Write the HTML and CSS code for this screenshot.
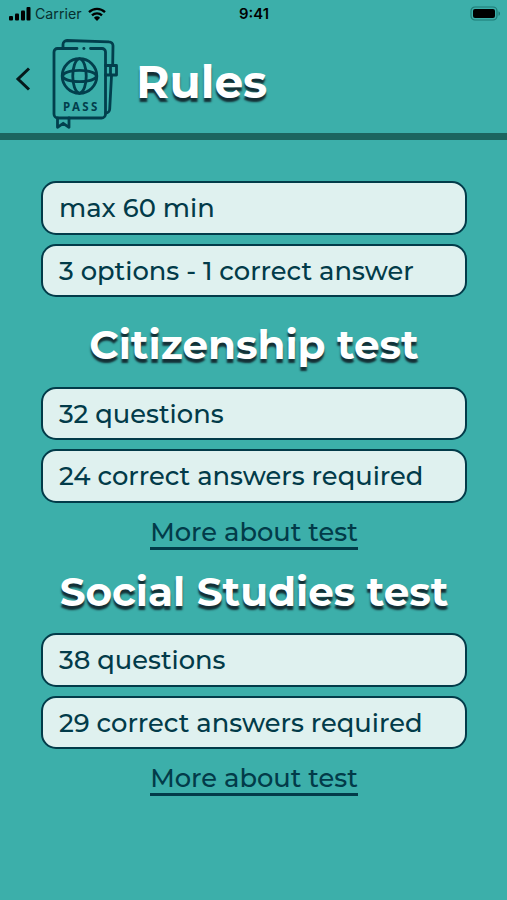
FILE: index.html
```
<!DOCTYPE html>
<html lang="en">
<head>
  <meta charset="UTF-8">
  <meta name="viewport" content="width=device-width, initial-scale=1">
  <title>Rules</title>
  <link rel="stylesheet" href="styles.css">
</head>
<body>

<div class="status-bar">
  <div class="status-left">
    <svg class="signal" viewBox="0 0 22 14" width="22" height="14">
      <rect x="0" y="9" width="4" height="4.5" rx="1"/>
      <rect x="6" y="6.5" width="4" height="7" rx="1"/>
      <rect x="12" y="3.5" width="4" height="10" rx="1"/>
      <rect x="17.5" y="0" width="4" height="13.5" rx="1"/>
    </svg>
    <span class="carrier">Carrier</span>
    <svg class="wifi" viewBox="0 0 18 14" width="18" height="14">
      <path d="M1 5.2a11.5 11.5 0 0 1 16 0M4 8.4a7.2 7.2 0 0 1 10 0" fill="none" stroke="#000" stroke-width="2.3"/>
      <path d="M9 14L5.9 10.8a4.5 4.5 0 0 1 6.2 0z"/>
    </svg>
  </div>
  <div class="time">9:41</div>
  <svg class="battery" viewBox="0 0 31 15" width="31" height="15">
    <rect x="1" y="1" width="26" height="13" rx="4" fill="none" stroke="#1d7a74" stroke-width="1.2"/>
    <rect x="3" y="3" width="22" height="9" rx="2"/>
    <path d="M28.5 5.2v4.6c2-.8 2-3.8 0-4.6z" fill="#1d7a74"/>
  </svg>
</div>

<header class="header">
  <a class="back" href="#" aria-label="Back">
    <svg viewBox="0 0 16 24" width="16" height="24">
      <path d="M14 1.5L3 12l11 10.5" fill="none" stroke="#05191b" stroke-width="3"/>
    </svg>
  </a>
  <svg class="passport" viewBox="0 0 68 92" width="68" height="92">
    <g fill="none" stroke="#023f4d" stroke-width="2.8" stroke-linecap="round" stroke-linejoin="round">
      <path d="M26 10.5H6.5A3.500 3.500 0 0 0 3 14v62a4 4 0 0 0 4 4h43.500a4 4 0 0 0 4-4V14a3.500 3.500 0 0 0-3.500-3.500H39.500"/>
      <path d="M32.8 10.5h.2"/>
      <path d="M12 10V6.500a4 4 0 0 1 4-4l42 1.300a4 4 0 0 1 4 4l-.3 18.700M60.500 38l-1.800 33a4 4 0 0 1-4 4"/>
      <path d="M54.500 27.500h11V37h-11M59.500 27.500V37"/>
      <path d="M6.500 80v9.300l5.700-4 5.800 4V80"/>
      <circle cx="28.500" cy="38" r="17.300"/>
      <path d="M28.500 20.700c-9 2-9 32.600 0 34.600M28.500 20.700c9 2 9 32.600 0 34.600"/>
      <path d="M11.500 38c3-7.500 31-7.500 34 0M11.500 38c3 7.500 31 7.500 34 0"/>
    </g>
    <text x="12" y="73" class="pass-text">PASS</text>
  </svg>
  <h1>Rules</h1>
</header>

<main class="content">
  <div class="card">max 60 min</div>
  <div class="card">3 options - 1 correct answer</div>

  <h2>Citizenship test</h2>
  <div class="card">32 questions</div>
  <div class="card">24 correct answers required</div>
  <a class="more" href="#">More about test</a>

  <h2>Social Studies test</h2>
  <div class="card">38 questions</div>
  <div class="card">29 correct answers required</div>
  <a class="more" href="#">More about test</a>
</main>

</body>
</html>
```
FILE: styles.css
```
* {
  box-sizing: border-box;
}

body {
  margin: 0;
  min-height: 900px;
  background: #3cafaa;
  color: #023b49;
  font-family: Montserrat, Inter, sans-serif;
}

.status-bar {
  display: grid;
  grid-template-columns: 1fr auto 1fr;
  align-items: center;
  height: 27px;
  padding: 0 6px 0 9px;
  color: #000;
  font-family: Inter, sans-serif;
}

.status-left {
  display: flex;
  align-items: center;
}

.carrier {
  margin: 0 6px 0 4px;
  font-size: 14.2px;
  color: #07302f;
}

.time {
  margin-right: 2px;
  font-size: 14.8px;
  font-weight: 600;
}

.battery {
  justify-self: end;
}

.header {
  display: flex;
  align-items: center;
  height: 113px;
  padding-left: 14px;
  border-bottom: 7px solid #1c655f;
}

.back {
  display: flex;
  margin: -2px 20px 0 1px;
}

.passport {
  margin-top: 7px;
}

.pass-text {
  fill: #023f4d;
  font-family: "Noto Sans", sans-serif;
  font-size: 11.5px;
  font-weight: 700;
  letter-spacing: 2.4px;
}

h1,
h2 {
  margin: 0;
  color: #fff;
  font-weight: 700;
  text-shadow: 0 4px 2px #142f35;
  white-space: nowrap;
}

h1 {
  margin: 4px 0 0 17px;
  font-size: 45.5px;
  line-height: 54px;
}

.content {
  display: flex;
  flex-direction: column;
  align-items: center;
  padding: 41px 40px 0 41px;
}

.card {
  width: 100%;
  height: 53.5px;
  padding-left: 16px;
  border: 2px solid #023b49;
  border-radius: 15px;
  background: #dff1ef;
  font-size: 25.75px;
  font-weight: 500;
  line-height: 50px;
  white-space: nowrap;
}

.card + .card {
  margin-top: 9px;
}

h2 {
  height: 89.5px;
  font-size: 40.5px;
  line-height: 95px;
}

.more {
  height: 35px;
  margin: 12px 0 -6px;
  border-bottom: 3px solid #023b49;
  color: inherit;
  font-size: 25.75px;
  font-weight: 500;
  line-height: 34px;
  text-decoration: none;
  white-space: nowrap;
}
```
